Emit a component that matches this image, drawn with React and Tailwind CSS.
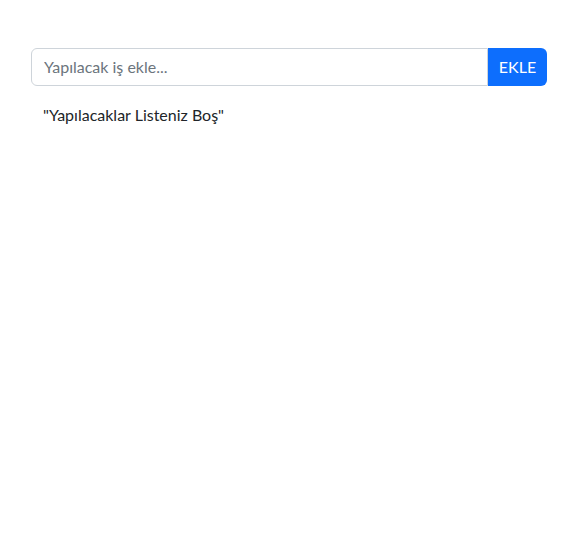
import React, { useState } from 'react';

export default function App() {
  const [todo, setTodo] = useState('');
  const [todos, setTodos] = useState([]);

  const addTodo = () => {
    if (!todo.trim()) return;
    setTodos(prev => [...prev, todo.trim()]);
    setTodo('');
  };

  return (
    <div className="min-h-screen bg-white px-[31px] pt-[48px] text-[#212529]" style={{ fontFamily: 'Lato, "Noto Sans", sans-serif' }}>
      <div className="flex h-[38px]">
        <input
          type="text"
          value={todo}
          onChange={e => setTodo(e.target.value)}
          placeholder="Yapılacak iş ekle..."
          className="flex-1 min-w-0 rounded-l-[6px] border border-[#ced4da] px-3 text-[16px] outline-none placeholder:text-[#6c757d]"
        />
        <button
          onClick={addTodo}
          className="w-[59px] rounded-r-[6px] bg-[#0d6efd] text-[16px] text-white"
        >
          EKLE
        </button>
      </div>
      <div className="mt-[17px] px-3 text-[16px] leading-6">
        {todos.length === 0 ? (
          <p>"Yapılacaklar Listeniz Boş"</p>
        ) : (
          <ul>
            {todos.map((t, i) => (
              <li key={i}>{t}</li>
            ))}
          </ul>
        )}
      </div>
    </div>
  );
}
